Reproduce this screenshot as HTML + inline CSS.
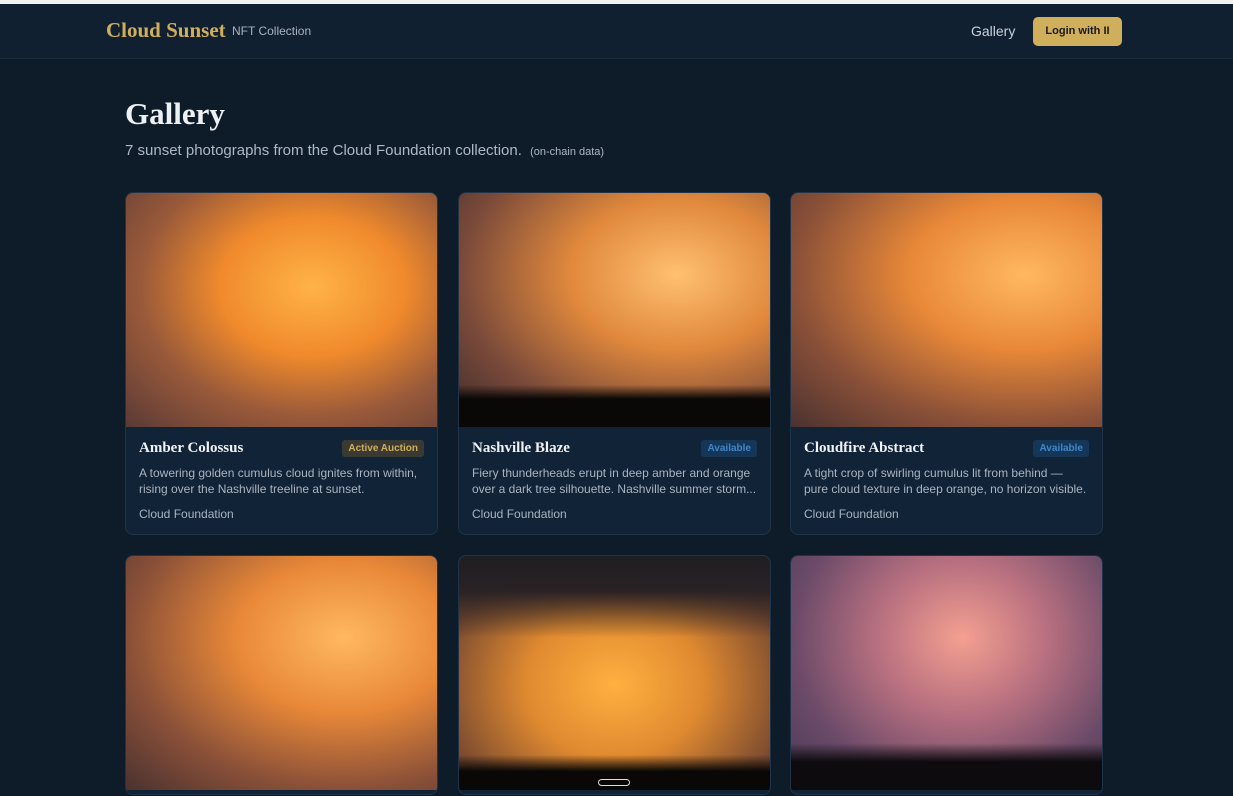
<!DOCTYPE html>
<html><head><meta charset="utf-8"><style>
*{margin:0;padding:0;box-sizing:border-box}
html{width:1233px;height:796px;overflow:hidden}
body{width:1233px;height:796px;overflow:hidden;background:#0e1c2a;font-family:"Liberation Sans",sans-serif;position:relative;border-top:4px solid #f2f2f2}
.hdr{position:absolute;top:0;left:0;right:0;height:55px;background:#112031;border-bottom:1px solid #1c2b3b}
.logo{position:absolute;left:106px;top:14px;font-family:"Liberation Serif",serif;font-weight:bold;font-size:21px;color:#cfae5c}
.sub{position:absolute;left:232px;top:20px;font-size:12px;color:#a9b3bf}
.nav{position:absolute;left:971px;top:19px;font-size:14px;color:#c9d0d8}
.btn{position:absolute;left:1033px;top:13px;width:89px;height:29px;background:#cfae5c;border-radius:5px;color:#1a1a1a;font-size:11px;font-weight:bold;text-align:center;line-height:29px}
h1{position:absolute;left:125px;top:92px;font-family:"Liberation Serif",serif;font-size:31px;color:#eef1f4}
.desc{position:absolute;left:125px;top:138px;font-size:15px;color:#aeb8c4}
.desc small{font-size:11px;color:#aeb8c4;margin-left:4px}
.card{position:absolute;width:313px;height:343px;background:#112336;border:1px solid #203348;border-radius:8px;overflow:hidden}
.r2{height:240px}
.img{height:234px}
.t{position:absolute;left:13px;top:247px;font-family:"Liberation Serif",serif;font-weight:bold;font-size:15px;color:#f0f2f4}
.b{position:absolute;right:13px;top:247px;font-size:10px;font-weight:bold;padding:3px 6px;border-radius:3px}
.ba{background:#3a3a32;color:#cfae5c}.bv{background:#163657;color:#3f86c8}
.d{position:absolute;left:13px;top:272px;white-space:nowrap;font-size:12px;line-height:16px;color:#aab4c0}
.f{position:absolute;left:13px;top:314px;font-size:12px;color:#aab4c0}
</style></head><body>
<div class="hdr"><div class="logo">Cloud Sunset</div><div class="sub">NFT Collection</div><div class="nav">Gallery</div><div class="btn">Login with II</div></div>
<h1>Gallery</h1>
<div class="desc">7 sunset photographs from the Cloud Foundation collection. <small>(on-chain data)</small></div>

<div class="card" style="left:125px;top:188px"><div class="img" style="background:radial-gradient(ellipse at 60% 40%,#ffb347 0%,#f08a2c 35%,#9a5a3a 65%,#5a3a36 100%)"></div>
<div class="t">Amber Colossus</div><div class="b ba">Active Auction</div>
<div class="d">A towering golden cumulus cloud ignites from within,<br>rising over the Nashville treeline at sunset.</div><div class="f">Cloud Foundation</div></div>

<div class="card" style="left:458px;top:188px"><div class="img" style="background:linear-gradient(to bottom,transparent 82%,#0a0806 88%),radial-gradient(ellipse at 70% 35%,#ffc070 0%,#e0883c 35%,#7a4a3a 70%,#3a2a2a 100%)"></div>
<div class="t">Nashville Blaze</div><div class="b bv">Available</div>
<div class="d">Fiery thunderheads erupt in deep amber and orange<br>over a dark tree silhouette. Nashville summer storm...</div><div class="f">Cloud Foundation</div></div>

<div class="card" style="left:790px;top:188px"><div class="img" style="background:radial-gradient(ellipse at 75% 35%,#ffb860 0%,#e88838 35%,#8a5038 70%,#4a3230 100%)"></div>
<div class="t">Cloudfire Abstract</div><div class="b bv">Available</div>
<div class="d">A tight crop of swirling cumulus lit from behind —<br>pure cloud texture in deep orange, no horizon visible.</div><div class="f">Cloud Foundation</div></div>

<div class="card r2" style="left:125px;top:551px"><div class="img" style="background:radial-gradient(ellipse at 70% 35%,#ffb860 0%,#e88838 35%,#8a5038 70%,#4a3230 100%)"></div></div>
<div class="card r2" style="left:458px;top:551px"><div class="img" style="background:linear-gradient(to bottom,#1e1e22 0%,#2a2224 15%,transparent 35%,transparent 85%,#0a0806 92%),radial-gradient(ellipse at 50% 55%,#ffb040 0%,#e08a30 40%,#7a4a30 80%)"></div></div>
<div class="card r2" style="left:790px;top:551px"><div class="img" style="background:linear-gradient(to bottom,transparent 80%,#0d0b0e 88%),radial-gradient(ellipse at 55% 35%,#f4a090 0%,#b87080 35%,#6a4a68 70%,#4a3a58 100%)"></div></div>
<div style="position:absolute;left:598px;top:775px;width:32px;height:7px;border:1px solid #ddd;border-radius:4px"></div>
</body></html>
